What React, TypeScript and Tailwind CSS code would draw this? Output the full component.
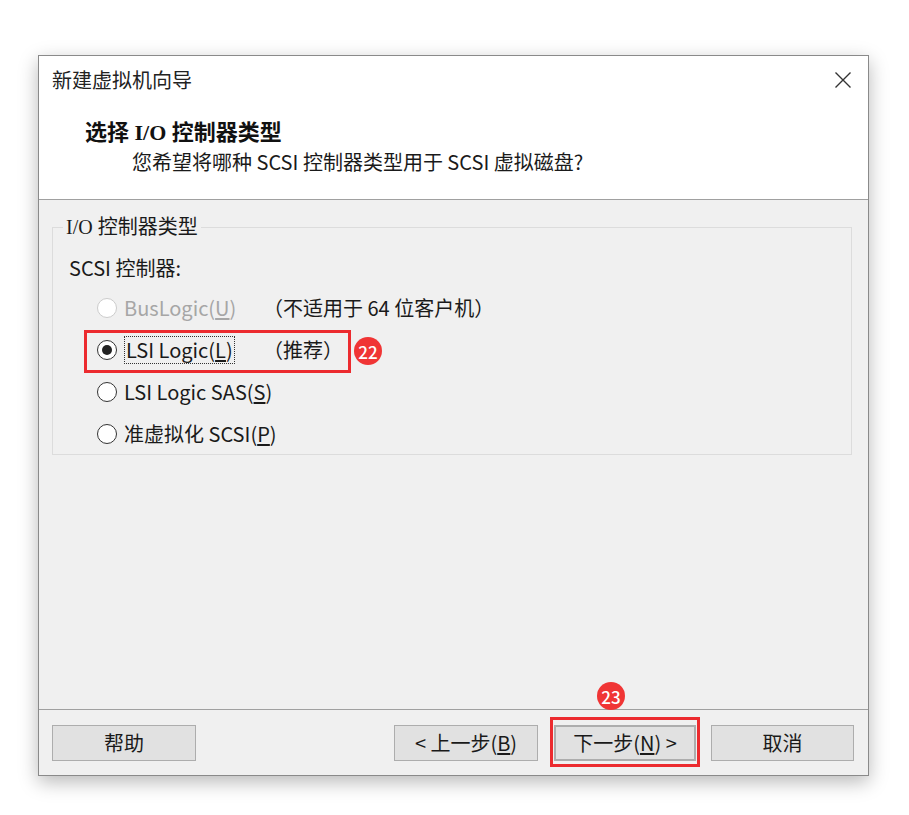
import type { ReactNode } from "react";

const Radio = ({ checked, disabled }: { checked?: boolean; disabled?: boolean }) => (
  <span
    className={`flex h-[20px] w-[20px] shrink-0 items-center justify-center rounded-full border bg-white ${
      disabled ? "border-[#cccccc]" : "border-[#333333]"
    }`}
  >
    {checked && <span className="h-[10px] w-[10px] rounded-full bg-[#222222]" />}
  </span>
);

const Key = ({ children }: { children: ReactNode }) => <span className="underline underline-offset-2">{children}</span>;

const Badge = ({ n, className }: { n: number; className: string }) => (
  <span
    className={`absolute flex h-[28px] w-[28px] items-center justify-center rounded-full bg-[#f03535] text-[17px] font-medium leading-none text-white ${className}`}
  >
    {n}
  </span>
);

const Button = ({ children, className = "" }: { children: ReactNode; className?: string }) => (
  <button className={`flex h-[36px] items-center justify-center border border-[#adadad] bg-[#e1e1e1] text-[20px] text-[#1a1a1a] ${className}`}>
    {children}
  </button>
);

export default function App() {
  return (
    <div className="h-[815px] w-[909px] bg-white pl-[38px] pt-[55px] font-['Noto_Sans_CJK_SC',sans-serif] text-[#1a1a1a]">
      <div className="flex h-[721px] w-[831px] flex-col border border-[#8a8a8a] bg-[#f0f0f0] shadow-[0_6px_18px_rgba(0,0,0,0.28)]">
        {/* header */}
        <div className="h-[144px] border-b border-[#a0a0a0] bg-white">
          <div className="flex items-center justify-between pl-[13px] pr-[16px] pt-[12px]">
            <span className="text-[20px] leading-[24px] text-[#222222]">新建虚拟机向导</span>
            <svg width="18" height="18" viewBox="0 0 18 18" className="text-[#333333]">
              <path d="M1.5 1.5 L16.5 16.5 M16.5 1.5 L1.5 16.5" stroke="currentColor" strokeWidth="1.4" />
            </svg>
          </div>
          <div className="mt-[28px] pl-[46px] font-['Liberation_Serif','Noto_Sans_CJK_SC',serif] text-[22px] font-bold leading-[26px] text-[#111111]">
            选择 I/O 控制器类型
          </div>
          <div className="mt-[3px] pl-[93px] text-[20px] leading-[26px]">您希望将哪种 SCSI 控制器类型用于 SCSI 虚拟磁盘?</div>
        </div>

        {/* body */}
        <div className="flex-1 pl-[13px] pr-[16px] pt-[14px]">
          <fieldset className="h-[241px] border border-[#dcdcdc]">
            <legend className="ml-[10px] px-[3px] font-['Liberation_Serif','Noto_Sans_CJK_SC',serif] text-[20px] leading-[26px]">
              I/O 控制器类型
            </legend>
            <div className="pl-[16px] pt-[15px] text-[20px] leading-[26px]">SCSI 控制器:</div>
            <div className="mt-[6px] flex flex-col text-[20px]">
              <div className="flex h-[42px] items-center">
                <div className="flex w-[210px] items-center gap-[7px] pl-[44px] text-[#a6a6a6]">
                  <Radio disabled />
                  <span>
                    BusLogic(<Key>U</Key>)
                  </span>
                </div>
                <span>（不适用于 64 位客户机）</span>
              </div>
              <div className="relative flex h-[42px] items-center">
                <div className="flex w-[210px] items-center gap-[7px] pl-[44px]">
                  <Radio checked />
                  <span className="-my-[2px] border border-dotted border-[#333333] px-[1px] leading-[26px]">
                    LSI Logic(<Key>L</Key>)
                  </span>
                </div>
                <span>（推荐）</span>
                <span className="absolute left-[31px] top-[1px] h-[43px] w-[267px] border-[3px] border-[#ec2b2f]" />
                <Badge n={22} className="left-[301px] top-[8px]" />
              </div>
              <div className="flex h-[42px] items-center gap-[7px] pl-[44px]">
                <Radio />
                <span>
                  LSI Logic SAS(<Key>S</Key>)
                </span>
              </div>
              <div className="flex h-[42px] items-center gap-[7px] pl-[44px]">
                <Radio />
                <span>
                  准虚拟化 SCSI(<Key>P</Key>)
                </span>
              </div>
            </div>
          </fieldset>
        </div>

        {/* footer */}
        <div className="flex h-[66px] items-start border-t border-[#a0a0a0] pl-[13px] pr-[14px] pt-[15px]">
          <Button className="w-[144px]">帮助</Button>
          <div className="ml-auto flex gap-[16px]">
            <Button className="w-[144px]">
              &lt; 上一步(<Key>B</Key>)
            </Button>
            <div className="relative">
              <Button className="w-[142px] border-2 border-[#0078d7]">
                下一步(<Key>N</Key>) &gt;
              </Button>
              <span className="absolute -bottom-[6px] -left-[4px] -right-[4px] -top-[8px] border-[3px] border-[#ec2b2f]" />
              <Badge n={23} className="left-[43px] -top-[43px]" />
            </div>
            <Button className="-ml-[1px] w-[143px]">取消</Button>
          </div>
        </div>
      </div>
    </div>
  );
}
